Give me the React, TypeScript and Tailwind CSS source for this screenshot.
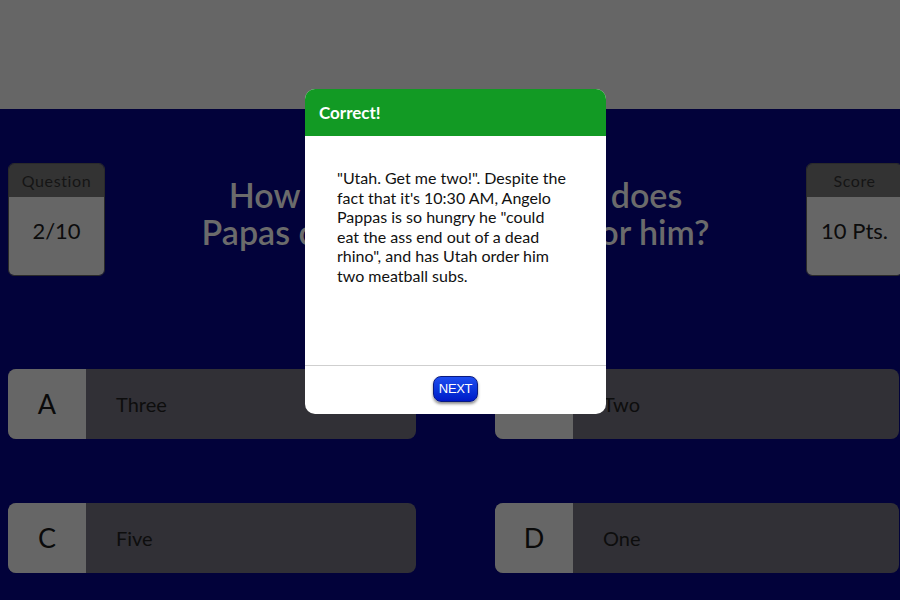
import React from 'react';

const answers = [
    { letter: 'A', text: 'Three' },
    { letter: 'B', text: 'Two' },
    { letter: 'C', text: 'Five' },
    { letter: 'D', text: 'One' },
];

const storyLines = [
    '"Utah. Get me two!". Despite the',
    "fact that it's 10:30 AM, Angelo",
    'Pappas is so hungry he "could',
    'eat the ass end out of a dead',
    'rhino", and has Utah order him',
    'two meatball subs.',
];

const font = { fontFamily: 'Lato, "Open Sans", sans-serif' };

const StatBox = ({ label, value }: { label: string; value: string }) => (
    <div className="w-[97px] h-[113px] shrink-0 flex flex-col rounded-[6px] border border-[#2a2a2a] overflow-hidden">
        <div className="h-[33px] bg-[#333333] flex items-center justify-center text-[16px] tracking-[0.6px] text-[#151515]">
            {label}
        </div>
        <div className="flex-1 bg-[#666666] flex items-center justify-center pb-[12px] text-[22px] text-[#0c0c0c]">
            {value}
        </div>
    </div>
);

const AnswerCard = ({ letter, text, width }: { letter: string; text: string; width: string }) => (
    <div className={`${width} h-[70px] shrink-0 flex rounded-[8px] overflow-hidden bg-[#313036]`}>
        <div className="w-[78px] bg-[#666666] flex items-center justify-center text-[27px] text-[#0a0a0a]">
            {letter}
        </div>
        <div className="flex-1 flex items-center pl-[30px] text-[20px] text-[#0d0d0d]">
            {text}
        </div>
    </div>
);

const App = () => {
    return (
        <div className="relative w-[900px] h-[600px] overflow-hidden bg-[#02023a]" style={font}>
            <div className="h-[109px] bg-[#666666]" />

            {/* header row: question count, title, score */}
            <div className="flex items-start pl-[8px] pt-[54px]">
                <StatBox label="Question" value="2/10" />
                <div className="flex-1 pt-[13px] text-center text-[34px] leading-[37px] font-semibold text-[#6b6b6b] whitespace-nowrap">
                    How many meatball subs does<br />
                    Papas coax Utah to order for him?
                </div>
                <div className="mr-[-3px]">
                    <StatBox label="Score" value="10 Pts." />
                </div>
            </div>

            {/* answers */}
            <div className="flex flex-col gap-[64px] pl-[8px] pt-[93px]">
                <div className="flex gap-[79px]">
                    <AnswerCard letter={answers[0].letter} text={answers[0].text} width="w-[408px]" />
                    <AnswerCard letter={answers[1].letter} text={answers[1].text} width="w-[404px]" />
                </div>
                <div className="flex gap-[79px]">
                    <AnswerCard letter={answers[2].letter} text={answers[2].text} width="w-[408px]" />
                    <AnswerCard letter={answers[3].letter} text={answers[3].text} width="w-[404px]" />
                </div>
            </div>

            {/* result dialog */}
            <div className="absolute left-[305px] top-[89px] w-[301px] h-[325px] flex flex-col bg-white rounded-[10px] overflow-hidden">
                <div className="h-[47px] bg-[#129a24] flex items-center pl-[14px] text-[17px] font-bold text-white">
                    Correct!
                </div>
                <div className="flex-1 px-[32px] pt-[32px] text-[16px] leading-[19.5px] text-[#111111]">
                    {storyLines.map((line) => (
                        <div key={line} className="whitespace-nowrap">{line}</div>
                    ))}
                </div>
                <div className="h-[49px] border-t border-[#cfcfcf] flex items-center justify-center pb-[2px]">
                    <button className="w-[45px] h-[26px] rounded-[8px] border border-[#0a1a80] bg-gradient-to-b from-[#1e4cf0] to-[#0018c8] shadow-[0_2px_3px_rgba(0,0,0,0.45)] text-[13px] text-white tracking-tight" style={{ fontFamily: '"Liberation Sans", Arial, sans-serif' }}>
                        NEXT
                    </button>
                </div>
            </div>
        </div>
    );
};

export default App;
